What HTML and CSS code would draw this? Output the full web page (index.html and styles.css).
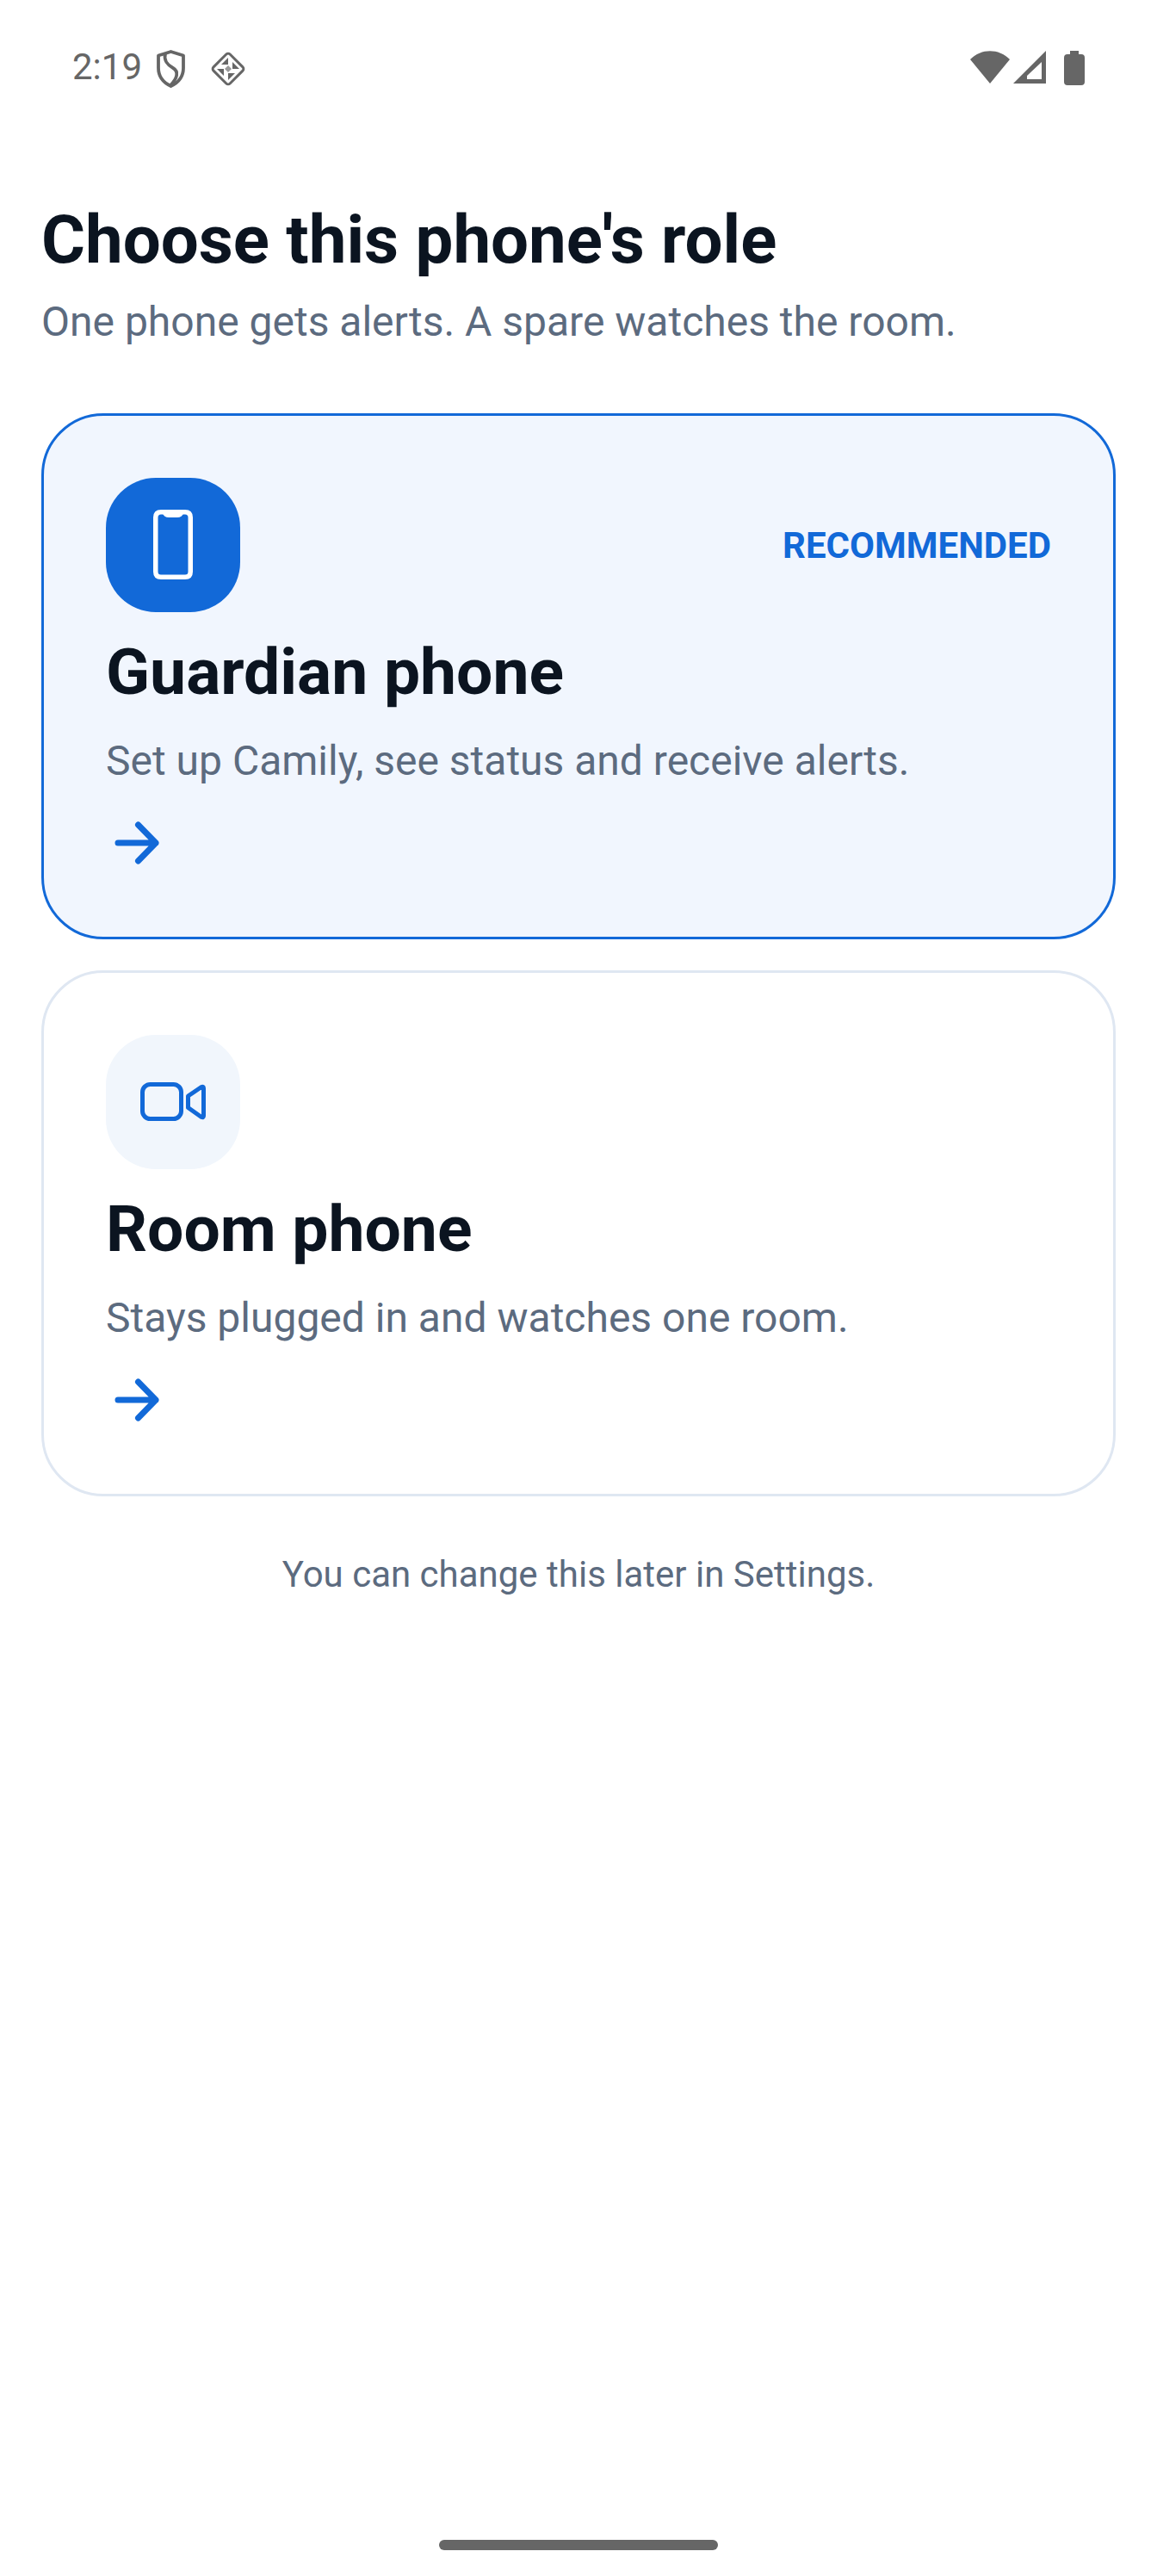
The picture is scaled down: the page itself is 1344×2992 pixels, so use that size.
FILE: index.html
```html
<!DOCTYPE html>
<html lang="en">
<head>
    <meta charset="UTF-8">
    <meta name="viewport" content="width=device-width, initial-scale=1.0">
    <title>Choose this phone's role</title>
    <link rel="stylesheet" href="styles.css">
</head>
<body>
<div class="screen">

    <!-- status bar -->
    <div class="status-bar">
        <div class="status-left">
            <span class="time">2:19</span>
            <svg class="shield" width="36" height="44" viewBox="0 0 36 44" fill="none" stroke="#666" stroke-width="3.8">
                <path d="M17.5 2 L32 6.5 V21 C32 31 26 38 17.5 42 C9 38 3 31 3 21 V6.5 Z" stroke-linejoin="round"/>
                <path d="M11 4 C9 12 14 18 20 21 C27 25 25 33 17 41"/>
            </svg>
            <svg class="diamond" width="44" height="44" viewBox="0 0 44 44">
                <rect x="8.5" y="8.5" width="27" height="27" rx="3" transform="rotate(45 22 22)" fill="none" stroke="#666" stroke-width="3"/>
                <path d="M22 9 V17 H14 Z M35 22 H27 V14 Z M22 35 V27 H30 Z M9 22 H17 V30 Z" fill="#666"/>
                <path d="M22 18 L26 22 L22 26 L18 22 Z" fill="#999"/>
            </svg>
        </div>
        <div class="status-right">
            <svg width="46" height="38" viewBox="0 0 46 38"><path d="M0 10 C13 -3 33 -3 46 10 L23 38 Z" fill="#666"/></svg>
            <svg width="38" height="38" viewBox="0 0 38 38"><path fill-rule="evenodd" d="M0 38 L38 0 V38 Z M16 33 H33 V13 L16 29 Z" fill="#666"/></svg>
            <svg class="battery" width="24" height="40" viewBox="0 0 24 40"><path d="M7 0 H17 V4 H20 Q24 4 24 8 V36 Q24 40 20 40 H4 Q0 40 0 36 V8 Q0 4 4 4 H7 Z" fill="#666"/></svg>
        </div>
    </div>

    <div class="content">
        <h1 class="page-title">Choose this phone's role</h1>
        <p class="page-sub">One phone gets alerts. A spare watches the room.</p>

        <!-- guardian card -->
        <div class="role-card active">
            <div class="card-top">
                <div class="icon-box">
                    <svg width="96" height="96" viewBox="0 0 96 96" fill="none" stroke="#fff" stroke-width="5.5">
                        <path d="M34 9.75 H62 Q68.25 9.75 68.25 16 V79 Q68.25 85.25 62 85.25 H34 Q27.75 85.25 27.75 79 V16 Q27.75 9.75 34 9.75 Z"/>
                        <path d="M37.5 10 Q39 14 43 14 H53 Q57 14 58.5 10" stroke-width="4"/>
                    </svg>
                </div>
                <span class="badge">RECOMMENDED</span>
            </div>
            <h2 class="card-title">Guardian phone</h2>
            <p class="card-desc">Set up Camily, see status and receive alerts.</p>
            <svg class="arrow" width="72" height="72" viewBox="0 0 72 72" fill="none" stroke="#1269d8" stroke-width="7" stroke-linecap="round" stroke-linejoin="round">
                <path d="M14 36 H58 M37.5 15 L58 36 L37.5 57"/>
            </svg>
        </div>

        <!-- room card -->
        <div class="role-card">
            <div class="card-top">
                <div class="icon-box light">
                    <svg width="96" height="96" viewBox="0 0 96 96" fill="none" stroke="#1269d8" stroke-width="5">
                        <rect x="12.5" y="27.5" width="45" height="40" rx="9"/>
                        <path d="M65.5 41 L81 30.5 Q83.5 29.5 83.5 32 V64 Q83.5 66.5 81 65.5 L65.5 54.5 Z" stroke-linejoin="round"/>
                    </svg>
                </div>
            </div>
            <h2 class="card-title">Room phone</h2>
            <p class="card-desc">Stays plugged in and watches one room.</p>
            <svg class="arrow" width="72" height="72" viewBox="0 0 72 72" fill="none" stroke="#1269d8" stroke-width="7" stroke-linecap="round" stroke-linejoin="round">
                <path d="M14 36 H58 M37.5 15 L58 36 L37.5 57"/>
            </svg>
        </div>

        <p class="footnote">You can change this later in Settings.</p>
    </div>

    <div class="home-bar"></div>
</div>
</body>
</html>
```

FILE: styles.css
```css
* {
    box-sizing: border-box;
}

body {
    margin: 0;
    padding: 0;
    background: #fff;
    font-family: Roboto, "Noto Sans", sans-serif;
}

.screen {
    height: 2992px;
    display: flex;
    flex-direction: column;
    overflow: hidden;
}

.status-bar {
    height: 156px;
    padding: 56px 84px 0 84px;
    display: flex;
    justify-content: space-between;
    align-items: flex-start;
}

.status-left,
.status-right {
    display: flex;
    align-items: flex-start;
}

.time {
    font-size: 42px;
    line-height: 44px;
    color: #666;
    margin-right: 16px;
}

.shield {
    margin: 2px 26px 0 0;
}

.diamond {
    margin-top: 2px;
}

.status-right {
    gap: 4px;
    margin-top: 3px;
}

.battery {
    margin-left: 17px;
}

.content {
    padding: 0 48px;
    flex: 1;
}

.page-title {
    font-size: 78px;
    line-height: 96px;
    font-weight: 700;
    color: #0b1420;
    margin: 75px 0 0 0;
}

.page-sub {
    font-size: 48px;
    line-height: 66px;
    color: #5c6b7f;
    margin: 14px 0 0 0;
}

.role-card {
    height: 611px;
    margin-top: 36px;
    padding: 72px;
    border: 3px solid #dfe7f2;
    border-radius: 72px;
    background: #fff;
}

.role-card.active {
    margin-top: 73px;
    background: #f1f6fe;
    border-color: #1269d8;
}

.card-top {
    display: flex;
    justify-content: space-between;
    align-items: center;
}

.icon-box {
    width: 156px;
    height: 156px;
    border-radius: 58px;
    background: #1269d8;
    display: flex;
    align-items: center;
    justify-content: center;
}

.icon-box.light {
    background: #f1f6fc;
}

.badge {
    font-size: 42px;
    font-weight: 700;
    color: #1269d8;
}

.card-title {
    font-size: 75px;
    line-height: 88px;
    font-weight: 700;
    color: #0b1420;
    margin: 25px 0 0 0;
}

.card-desc {
    font-size: 48px;
    line-height: 72px;
    color: #5c6b7f;
    margin: 24px 0 0 0;
}

.arrow {
    display: block;
    margin-top: 23px;
}

.footnote {
    font-size: 42px;
    line-height: 60px;
    color: #5c6b7f;
    text-align: center;
    margin: 61px 0 0 0;
}

.home-bar {
    width: 324px;
    height: 12px;
    flex: none;
    margin: 0 auto 30px;
    border-radius: 6px;
    background: #666;
}
```
